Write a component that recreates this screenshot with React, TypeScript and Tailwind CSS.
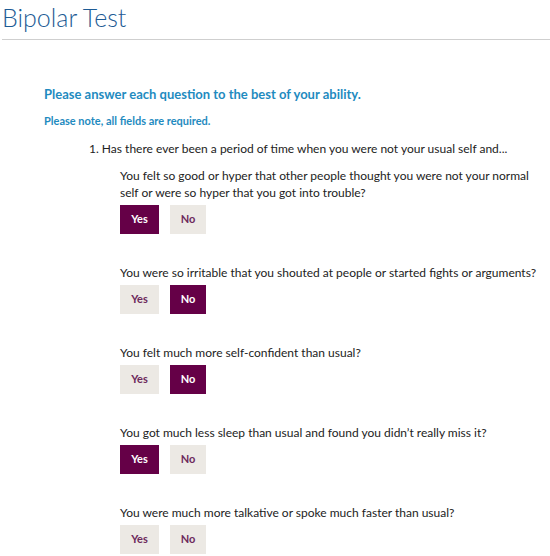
import React, { useState } from "react";

type Answer = "yes" | "no" | null;

const questions: { text: string; initial: Answer }[] = [
  {
    text: "You felt so good or hyper that other people thought you were not your normal self or were so hyper that you got into trouble?",
    initial: "yes",
  },
  { text: "You were so irritable that you shouted at people or started fights or arguments?", initial: "no" },
  { text: "You felt much more self-confident than usual?", initial: "no" },
  { text: "You got much less sleep than usual and found you didn\u2019t really miss it?", initial: "yes" },
  { text: "You were much more talkative or spoke much faster than usual?", initial: null },
];

function ChoiceButton({ label, active, onClick }: { label: string; active: boolean; onClick: () => void }) {
  return (
    <button
      type="button"
      onClick={onClick}
      className={
        active
          ? "flex h-[29px] w-full items-center justify-center bg-[#650047] text-[11px] font-bold text-white"
          : "flex h-[29px] w-full items-center justify-center bg-[#ece9e4] text-[11px] font-bold text-[#6d2a5c]"
      }
    >
      {label}
    </button>
  );
}

function Question({ text, initial }: { text: string; initial: Answer }) {
  const [answer, setAnswer] = useState<Answer>(initial);

  return (
    <div className="flex flex-col gap-[4px]">
      <p className="max-w-[428px] text-[12px] leading-[17px] text-[#222]">{text}</p>
      <div className="flex gap-[11px]">
        <div className="w-[39px]">
          <ChoiceButton label="Yes" active={answer === "yes"} onClick={() => setAnswer("yes")} />
        </div>
        <div className="w-[36px]">
          <ChoiceButton label="No" active={answer === "no"} onClick={() => setAnswer("no")} />
        </div>
      </div>
    </div>
  );
}

export default function App() {
  return (
    <div className="min-h-screen bg-white font-['Lato',sans-serif]">
      <header className="ml-[2px] border-b border-[#cfcfcf] pb-[6px] pt-[1px]">
        <h1 className="text-[25px] font-light leading-[32px] text-[#1d5b95]">Bipolar Test</h1>
      </header>

      <section className="pl-[44px] pt-[46px]">
        <h2 className="text-[13px] font-bold leading-[17px] text-[#1f8bc0]">
          Please answer each question to the best of your ability.
        </h2>
        <p className="mt-[11px] text-[11px] font-bold leading-[14px] text-[#1f8bc0]">
          Please note, all fields are required.
        </p>

        <div className="mt-[13px] pl-[45px]">
          <p className="text-[12px] leading-[16px] text-[#222]">
            1. Has there ever been a period of time when you were not your usual self and...
          </p>
          <div className="mt-[10px] flex flex-col gap-[30px] pl-[31px]">
            {questions.map((q) => (
              <Question key={q.text} text={q.text} initial={q.initial} />
            ))}
          </div>
        </div>
      </section>
    </div>
  );
}
